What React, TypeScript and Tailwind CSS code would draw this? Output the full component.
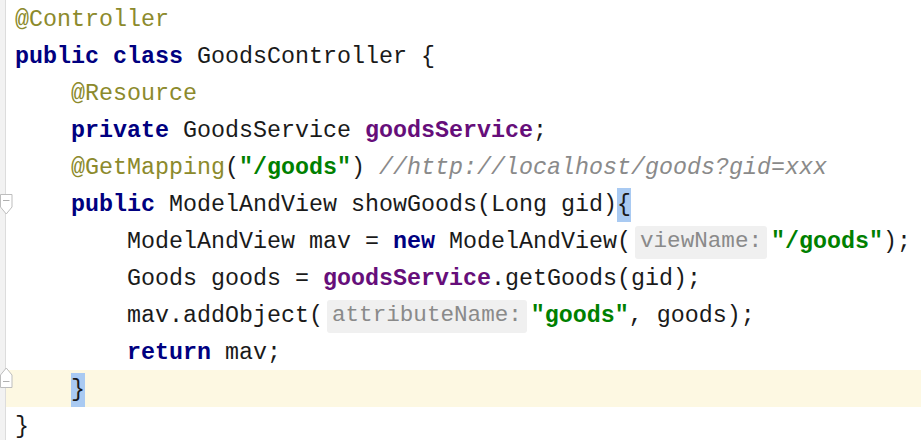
type Tok = { t: string; c?: string };

const K = "font-bold text-[#000080]";
const A = "text-[#8c8a2c]";
const F = "font-bold text-[#660e7a]";
const S = "font-bold text-[#008000]";
const C = "italic text-[#8a8a8a]";

type Line = {
  toks: Tok[];
  current?: boolean;
  fold?: "down" | "up";
};

function Hint({ text }: { text: string }) {
  return (
    <span className="mx-[4px] inline-flex h-[33px] items-center rounded-[3px] bg-[#f0f0f0] px-[5px] text-[22.6px] text-[#8a8a8a]">
      {text}
    </span>
  );
}

function Brace({ ch }: { ch: string }) {
  return (
    <span className="inline-flex h-[34px] items-center bg-[#a9caf2]">{ch}</span>
  );
}

const lines: Line[] = [
  { toks: [{ t: "@Controller", c: A }] },
  { toks: [{ t: "public class", c: K }, { t: " GoodsController {" }] },
  { toks: [{ t: "    " }, { t: "@Resource", c: A }] },
  {
    toks: [
      { t: "    " },
      { t: "private", c: K },
      { t: " GoodsService " },
      { t: "goodsService", c: F },
      { t: ";" },
    ],
  },
  {
    toks: [
      { t: "    " },
      { t: "@GetMapping", c: A },
      { t: "(" },
      { t: "\"/goods\"", c: S },
      { t: ") " },
      { t: "//http://localhost/goods?gid=xxx", c: C },
    ],
  },
  {
    toks: [
      { t: "    " },
      { t: "public", c: K },
      { t: " ModelAndView showGoods(Long gid)" },
      { t: "{", c: "brace" },
    ],
    fold: "down",
  },
  {
    toks: [
      { t: "        ModelAndView mav = " },
      { t: "new", c: K },
      { t: " ModelAndView(" },
      { t: "viewName:", c: "hint" },
      { t: "\"/goods\"", c: S },
      { t: ");" },
    ],
  },
  {
    toks: [
      { t: "        Goods goods = " },
      { t: "goodsService", c: F },
      { t: ".getGoods(gid);" },
    ],
  },
  {
    toks: [
      { t: "        mav.addObject(" },
      { t: "attributeName:", c: "hint" },
      { t: "\"goods\"", c: S },
      { t: ", goods);" },
    ],
  },
  { toks: [{ t: "        " }, { t: "return", c: K }, { t: " mav;" }] },
  { toks: [{ t: "    " }, { t: "}", c: "brace" }], current: true, fold: "up" },
  { toks: [{ t: "}" }] },
];

function FoldMarker({ dir }: { dir: "down" | "up" }) {
  return (
    <svg
      className={
        dir === "down"
          ? "absolute left-0 top-[9px] h-[22px] w-[13px]"
          : "absolute left-0 top-[-4px] h-[22px] w-[13px]"
      }
      viewBox="0 0 13 22"
    >
      {dir === "down" ? (
        <>
          <path d="M0.5 0.5 H12 V13 L6.25 20 L0.5 13 Z" fill="#fff" stroke="#bdbdbd" />
          <path d="M3 6.5 H9.5" stroke="#b0b0b0" />
        </>
      ) : (
        <>
          <path d="M0.5 21.5 H12 V9 L6.25 2 L0.5 9 Z" fill="#fff" stroke="#bdbdbd" />
          <path d="M3 15.5 H9.5" stroke="#b0b0b0" />
        </>
      )}
    </svg>
  );
}

export default function App() {
  return (
    <div
      className="h-[440px] w-[921px] overflow-hidden bg-white text-[23.33px] text-[#1a1a1a]"
      style={{ fontFamily: '"Liberation Mono", "Courier New", monospace' }}
    >
      {lines.map((ln, i) => (
        <div key={i} className="relative flex h-[37px]">
          <div className="w-[6px] shrink-0 border-r border-[#dcdcdc] bg-[#f2f2f2]" />
          <div
            className={
              ln.current
                ? "flex flex-1 items-center whitespace-pre bg-[#fdf8e2] pl-[9px] pt-[3px]"
                : "flex flex-1 items-center whitespace-pre pl-[9px] pt-[3px]"
            }
          >
            {ln.toks.map((tk, j) =>
              tk.c === "hint" ? (
                <Hint key={j} text={tk.t} />
              ) : tk.c === "brace" ? (
                <Brace key={j} ch={tk.t} />
              ) : (
                <span key={j} className={tk.c}>
                  {tk.t}
                </span>
              )
            )}
          </div>
          {ln.fold && <FoldMarker dir={ln.fold} />}
        </div>
      ))}
    </div>
  );
}
